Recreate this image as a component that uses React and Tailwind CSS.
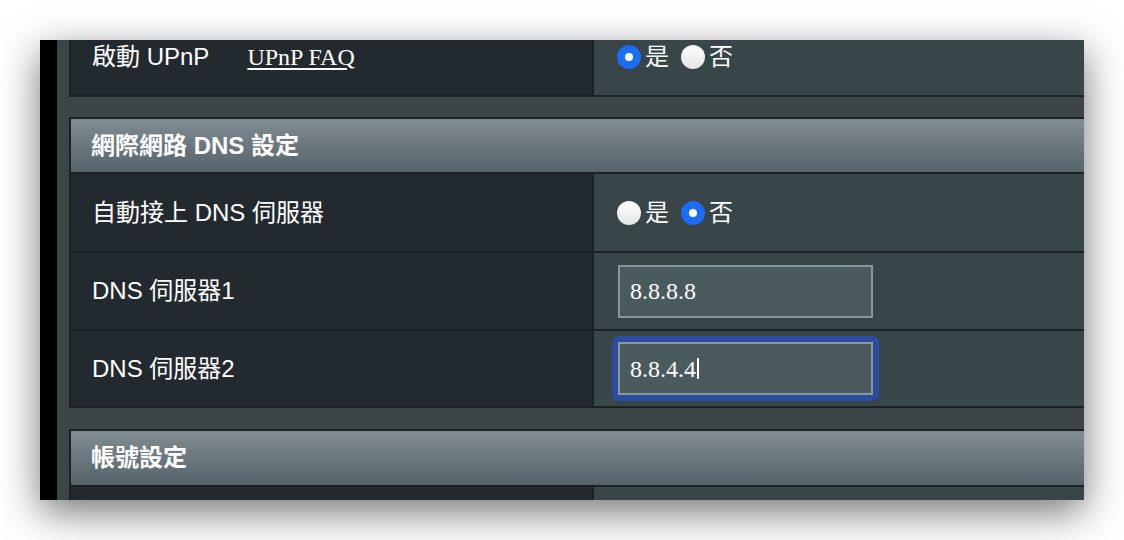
import React from 'react';

const sans = { fontFamily: '"Liberation Sans", "Noto Sans CJK TC", sans-serif' };
const serif = { fontFamily: '"Liberation Serif", "Noto Sans CJK TC", serif' };

function Radio({ checked, label }) {
  return (
    <span className="flex items-center gap-[4px]">
      {checked ? (
        <span className="flex h-[24px] w-[24px] items-center justify-center rounded-full bg-[#1d6cf5]">
          <span className="h-[8px] w-[8px] rounded-full bg-white" />
        </span>
      ) : (
        <span className="h-[24px] w-[24px] rounded-full bg-gradient-to-b from-white to-[#e4e4e4]" />
      )}
      <span className="text-[24px] leading-none text-white">{label}</span>
    </span>
  );
}

function RadioGroup({ value }) {
  return (
    <div className="flex items-center gap-[12px]">
      <Radio checked={value === 'yes'} label="是" />
      <Radio checked={value === 'no'} label="否" />
    </div>
  );
}

function TextBox({ value, focused }) {
  const box = (
    <div
      className="flex h-[53px] w-[255px] items-center border-2 border-[#8a979b] bg-[#4a5a5f] pl-[10px] text-[24px] text-white"
      style={serif}
    >
      <span style={serif}>{value}</span>
      {focused && <span className="ml-[1px] h-[21px] w-[1.5px] bg-white" />}
    </div>
  );
  if (!focused) return box;
  return (
    <div className="-m-[6px] rounded-[6px] bg-[#2b4c9f] p-[6px]">{box}</div>
  );
}

function Row({ label, height, children }) {
  return (
    <div className="flex gap-[2px]" style={{ height }}>
      <div className="flex w-[521px] items-center bg-[#232a2f] pl-[21px] text-[24px] text-white">
        {label}
      </div>
      <div className="flex flex-1 items-center bg-[#384549]">{children}</div>
    </div>
  );
}

function Header({ title, height }) {
  return (
    <div
      className="flex items-center bg-gradient-to-b from-[#818d92] to-[#56636a] pl-[20px] text-[24px] font-bold text-white"
      style={{ height }}
    >
      {title}
    </div>
  );
}

function Table({ children, className = '' }) {
  return (
    <div className={`flex flex-col gap-[2px] border-2 border-[#1b2124] bg-[#1b2124] ${className}`}>
      {children}
    </div>
  );
}

export default function App() {
  return (
    <div className="h-[540px] w-[1124px] bg-white p-[40px]" style={sans}>
      <div className="flex h-[460px] w-[1044px] overflow-hidden shadow-[0_12px_38px_rgba(0,0,0,0.55)]">
        <div className="w-[17px] shrink-0 bg-black" />
        <div className="flex-1 overflow-hidden bg-[#3c4649] pl-[12px]">
          <div className="-mt-[24px] flex w-[1040px] flex-col">
            <Table>
              <Row
                height={77}
                label={
                  <span className="flex items-center">
                    <span>啟動 UPnP</span>
                    <a href="#" className="ml-[38px] text-white underline underline-offset-[3px]" style={serif}>
                      UPnP FAQ
                    </a>
                  </span>
                }
              >
                <div className="pl-[23px]">
                  <RadioGroup value="yes" />
                </div>
              </Row>
            </Table>

            <Table className="mt-[20px]">
              <Header title="網際網路 DNS 設定" height={53} />
              <Row label="自動接上 DNS 伺服器" height={77}>
                <div className="pl-[23px]">
                  <RadioGroup value="no" />
                </div>
              </Row>
              <Row label="DNS 伺服器1" height={76}>
                <div className="pl-[24px]">
                  <TextBox value="8.8.8.8" />
                </div>
              </Row>
              <Row label="DNS 伺服器2" height={75}>
                <div className="pl-[24px]">
                  <TextBox value="8.8.4.4" focused />
                </div>
              </Row>
            </Table>

            <Table className="mt-[21px]">
              <Header title="帳號設定" height={54} />
              <Row label="" height={77}>
                <div />
              </Row>
            </Table>
          </div>
        </div>
      </div>
    </div>
  );
}
